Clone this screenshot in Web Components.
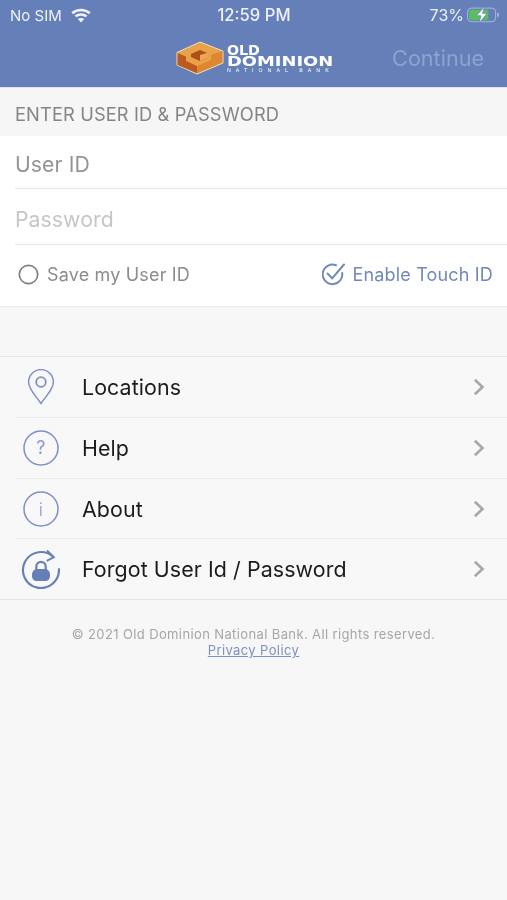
<!DOCTYPE html>
<html lang="en"><head><meta charset="utf-8"><title>Old Dominion National Bank</title>
<style>
html,body{margin:0;padding:0;background:#f7f7f7;height:100%}
body{font-family:Inter,"Liberation Sans",sans-serif;width:507px;min-height:900px;overflow:hidden;filter:blur(.35px)}
</style></head><body>
<app-header></app-header>
<section-label>ENTER USER ID &amp; PASSWORD</section-label>
<login-form></login-form>
<menu-list>
  <menu-row icon="pin">Locations</menu-row>
  <menu-row icon="help">Help</menu-row>
  <menu-row icon="info" short>About</menu-row>
  <menu-row icon="lock" last>Forgot User Id / Password</menu-row>
</menu-list>
<page-footer></page-footer>
<script>
function def(name, html){
  customElements.define(name, class extends HTMLElement{
    constructor(){super();this.attachShadow({mode:'open'}).innerHTML=html;}
  });
}
def('app-header',`<style>
:host{display:block;height:87px;background:#6580b8;color:#fff;border-bottom:1px solid #dfe3ee}
.status{height:30px;display:grid;grid-template-columns:1fr auto 1fr;align-items:center;padding:0 7px 0 10px;font-size:15px;color:#eef1f8}
.l{display:flex;align-items:center;gap:8px}
.l svg{margin-left:1px}
.r{display:flex;justify-content:flex-end;align-items:center;gap:3px;font-size:16px}
.t{font-size:16.6px;font-weight:500;margin-right:2px}
.nav{height:57px;display:flex;align-items:center;padding:0 23px 2px 176px;box-sizing:border-box;justify-content:space-between}
.logo{display:flex;align-items:center;gap:3px;height:36px}
.w{font-family:"DejaVu Sans",sans-serif;font-weight:700;display:flex;flex-direction:column;color:#fff;width:106px;margin-top:3px}
.w span{display:block;white-space:nowrap;transform-origin:left center}
.a{font-size:13.4px;line-height:10px;height:10px;transform:scaleX(1.06)}
.b{font-size:13.4px;line-height:11px;height:11px;transform:scaleX(1.335)}
.c{font-size:5.2px;line-height:5px;height:5px;letter-spacing:4.95px;margin-top:1px;font-weight:400}
.cont{font-size:21.6px;color:#8ea3cf}
</style>
<div class="status"><div class="l"><span>No SIM</span>
<svg width="20" height="15" viewBox="0 0 20 15"><g fill="none" stroke="#eef1f8" stroke-width="2.500"><path d="M1.200 5.200C6 .9 14 .9 18.800 5.200"/><path d="M4.400 8.400c3.200-2.700 8-2.700 11.200 0"/></g><path d="M6.800 11c1.900-1.300 4.500-1.300 6.400 0L10 14.600z" fill="#eef1f8"/></svg></div>
<div class="t">12:59 PM</div>
<div class="r"><span>73%</span>
<svg width="33" height="16" viewBox="0 0 33 16"><rect x=".6" y="1.100" width="28" height="13.600" rx="3.600" fill="none" stroke="#aab8d8" stroke-width="1"/><rect x="2.300" y="2.800" width="19" height="10.200" rx="1.800" fill="#59c05d"/><path d="M30.200 5.600c1.200.3 1.800 1.200 1.800 2.300s-.6 2-1.800 2.300z" fill="#aab8d8"/><path d="M17.500 -.3 9.300 8.800h4.600l-2 7.500 8.300-10h-4.600z" fill="#fff" stroke="#6580b8" stroke-width=".8"/></svg></div></div>
<div class="nav"><div class="logo">
<svg width="48" height="34" viewBox="0 0 48 34"><path d="M24 1 47 10v12L21 33 1 24V11.500z" fill="#e9a24a" stroke="#f0dfc4" stroke-width="1"/><path d="M1.500 12 10 15.500V20l11 5v7.300L1.500 24z" fill="#bd5a1e"/><path d="M21 25l14-6v-5l11.500-4v11.600L21 32.300z" fill="#dd8733"/><path d="M15 13l9-4 7 3v5l-7 3-9-4z" fill="#ad4f18"/><path d="M24 14l7-2v5l-7 3z" fill="#f0a850"/></svg>
<div class="w"><span class="a">OLD</span><span class="b">DOMINION</span><span class="c">NATIONAL BANK</span></div></div>
<div class="cont">Continue</div></div>`);
def('section-label',`<style>
:host{display:flex;align-items:center;box-sizing:border-box;height:48px;padding:4px 15px 0;font-size:18.3px;letter-spacing:.12px;color:#858585;background:#f6f6f6}
</style><slot></slot>`);
def('login-form',`<style>
:host{display:block;background:#fff;border-bottom:1px solid #ececec;font-size:21.2px}
.f{margin-left:15px;display:flex;align-items:center;border-bottom:1px solid #e9e9e9;padding-top:4px;letter-spacing:.08px}
.f.u{color:#949494;height:48px}
.f.p{color:#c6c6c6;height:51px}
.o{height:61px;box-sizing:border-box;padding:0 14px 2px 18px;display:flex;align-items:center;justify-content:space-between;font-size:18px;letter-spacing:.17px}
.s,.e{display:flex;align-items:center}
.s{color:#8c8c8c;gap:8px}.e{color:#7288bb;gap:7px}
</style>
<div class="f u">User ID</div><div class="f p">Password</div>
<div class="o"><div class="s"><svg width="21" height="21" viewBox="0 0 21 21"><circle cx="10.500" cy="10.500" r="9.200" fill="none" stroke="#808080" stroke-width="1.700"/></svg><span>Save my User ID</span></div>
<div class="e"><svg width="23" height="23" viewBox="0 0 23 23" fill="none" stroke="#7288bb" stroke-width="2" stroke-linecap="round"><path d="M20.200 10A9.800 9.800 0 1 1 14 2.200"/><path d="M5.500 10.500l4.700 4.800L22 1.500"/></svg><span>Enable Touch ID</span></div></div>`);
def('menu-list',`<style>
:host{display:block;margin-top:49px;border-top:1px solid #e6e6e6;border-bottom:1px solid #e4e4e4;background:#f8f8f8}
</style><slot></slot>`);
const icons={
pin:`<svg width="28" height="36" viewBox="0 0 28 36" fill="none" stroke="#7f90c6" stroke-width="1.500"><path d="M14 34.500C9 27 1.600 20.500 1.600 13A12.400 12.400 0 0 1 26.400 13C26.400 20.500 19 27 14 34.500Z"/><circle cx="14" cy="13" r="4.800" stroke-width="1.800"/></svg>`,
help:`<svg width="36" height="36" viewBox="0 0 36 36"><circle cx="18" cy="18" r="17" fill="none" stroke="#7f90c6" stroke-width="1.500"/><text x="18" y="24" text-anchor="middle" font-family="Inter,sans-serif" font-size="18" fill="#8b98c8">?</text></svg>`,
info:`<svg width="36" height="36" viewBox="0 0 36 36"><circle cx="18" cy="18" r="17" fill="none" stroke="#7f90c6" stroke-width="1.500"/><text x="18" y="24.500" text-anchor="middle" font-family="Inter,sans-serif" font-size="18" font-weight="300" fill="#8b98c8">i</text></svg>`,
lock:`<svg width="40" height="40" viewBox="0 0 40 40" fill="none"><path d="M32.700 8.300A18 18 0 1 0 37.900 19.400" stroke="#6580b8" stroke-width="2.200"/><path d="M26 1.500 32.700 8.300l-7 3.500" stroke="#6580b8" stroke-width="2"/><path d="M15.300 21v-3.500a4.700 4.700 0 0 1 9.400 0V21" stroke="#6580b8" stroke-width="2.200"/><path d="M11 26c0-3.500 2-6 5-6h8c3 0 5 2.500 5 6v1c0 3-2 5-5 5h-8c-3 0-5-2-5-5z" fill="#6580b8"/></svg>`};
customElements.define('menu-row',class extends HTMLElement{
  constructor(){super();const r=this.attachShadow({mode:'open'});
    r.innerHTML=`<style>
:host{display:flex;align-items:center;height:61px;margin-left:16px;padding-right:22px;font-size:21.4px;letter-spacing:.08px;color:#1c1c1c;border-bottom:1px solid #ebebeb;box-sizing:border-box}
:host([short]){height:60px}
:host([last]){border-bottom:0;height:60px}
.i{width:50px;display:flex;justify-content:center;margin-right:16px;flex:none}
.t{flex:1}
</style><div class="i"></div><div class="t"><slot></slot></div>
<svg width="12" height="18" viewBox="0 0 12 18" fill="none" stroke="#a8a8a8" stroke-width="2.600"><path d="M1.800 1.800 9.500 9 1.800 16.200"/></svg>`;}
  connectedCallback(){this.shadowRoot.querySelector('.i').innerHTML=icons[this.getAttribute('icon')];}
});
def('page-footer',`<style>
:host{display:block;text-align:center;font-size:13px;line-height:16px;color:#a6a6a6;padding-top:26px;letter-spacing:.38px}
a{color:#7e90c2;text-decoration:underline}
</style><div>© 2021 Old Dominion National Bank. All rights reserved.</div><a href="#">Privacy Policy</a>`);
</script>
</body></html>
